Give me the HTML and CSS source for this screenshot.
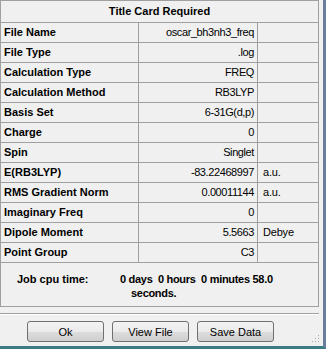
FILE: index.html
```html
<!DOCTYPE html>
<html lang="en">
<head>
  <meta charset="UTF-8" />
  <title>Title Card Required</title>
  <link rel="stylesheet" href="styles.css">
</head>
<body>
  <div class="frame">
    <div class="panel">
      <div class="title">Title Card Required</div>

      <div class="row"><div class="key">File Name</div><div class="val">oscar_bh3nh3_freq</div><div class="unit"></div></div>
      <div class="row"><div class="key">File Type</div><div class="val">.log</div><div class="unit"></div></div>
      <div class="row"><div class="key">Calculation Type</div><div class="val">FREQ</div><div class="unit"></div></div>
      <div class="row"><div class="key">Calculation Method</div><div class="val">RB3LYP</div><div class="unit"></div></div>
      <div class="row"><div class="key">Basis Set</div><div class="val">6-31G(d,p)</div><div class="unit"></div></div>
      <div class="row"><div class="key">Charge</div><div class="val">0</div><div class="unit"></div></div>
      <div class="row"><div class="key">Spin</div><div class="val">Singlet</div><div class="unit"></div></div>
      <div class="row"><div class="key">E(RB3LYP)</div><div class="val">-83.22468997</div><div class="unit">a.u.</div></div>
      <div class="row"><div class="key">RMS Gradient Norm</div><div class="val">0.00011144</div><div class="unit">a.u.</div></div>
      <div class="row"><div class="key">Imaginary Freq</div><div class="val">0</div><div class="unit"></div></div>
      <div class="row"><div class="key">Dipole Moment</div><div class="val">5.5663</div><div class="unit">Debye</div></div>
      <div class="row"><div class="key">Point Group</div><div class="val">C3</div><div class="unit"></div></div>

      <div class="job">
        <div class="job-label">Job cpu time:</div>
        <div class="job-time">
          <div>0 days&nbsp; 0 hours&nbsp; 0 minutes 58.0</div>
          <div class="job-wrap">seconds.</div>
        </div>
      </div>
    </div>

    <div class="sep"></div>

    <div class="buttons">
      <button>Ok</button>
      <button>View File</button>
      <button>Save Data</button>
      <span class="grip">
        <svg width="8" height="8" viewBox="0 0 8 8">
          <rect x="6" y="0" width="1" height="1" fill="#a8a8a8"/>
          <rect x="3" y="3" width="1" height="1" fill="#a8a8a8"/>
          <rect x="6" y="3" width="1" height="1" fill="#a8a8a8"/>
          <rect x="0" y="6" width="1" height="1" fill="#a8a8a8"/>
          <rect x="3" y="6" width="1" height="1" fill="#a8a8a8"/>
          <rect x="6" y="6" width="1" height="1" fill="#a8a8a8"/>
        </svg>
      </span>
    </div>
  </div>
</body>
</html>
```

FILE: styles.css
```css
body {
  margin: 0;
  background-color: #f0f0f0;
  font-family: "Liberation Sans", Arial, sans-serif;
  font-size: 11px;
  color: #000000;
  overflow: hidden;
}

.frame {
  width: 323px;
  height: 346px;
  border-right: 3px solid #6b7f9c;
  border-bottom: 3px solid #3d7b86;
  position: relative;
}

.panel {
  width: 317px;
  border: 1px solid #a0a0a0;
}

.title {
  height: 21px;
  line-height: 21px;
  text-align: center;
  font-weight: bold;
  border-bottom: 1px solid #a0a0a0;
}

.row {
  display: grid;
  grid-template-columns: 138px 119px 1fr;
  height: 19px;
  line-height: 19px;
  border-bottom: 1px solid #a0a0a0;
}

.key {
  font-weight: bold;
  padding-left: 3px;
  border-right: 1px solid #a0a0a0;
  white-space: nowrap;
}

.val {
  text-align: right;
  padding-right: 3px;
  letter-spacing: -0.4px;
  border-right: 1px solid #a0a0a0;
  white-space: nowrap;
}

.unit {
  padding-left: 5px;
  letter-spacing: -0.2px;
}

.job {
  display: flex;
  box-sizing: border-box;
  height: 43px;
  padding-top: 9px;
  font-weight: bold;
  line-height: 14px;
}

.job-label {
  width: 103px;
  padding-left: 16px;
}

.job-time {
  letter-spacing: -0.3px;
}

.job-wrap {
  padding-left: 11px;
}

.sep {
  margin-top: 6px;
  width: 319px;
  border-top: 1px solid #a0a0a0;
  border-bottom: 1px solid #ffffff;
}

.buttons {
  display: flex;
  gap: 8px;
  padding-left: 27px;
  margin-top: 6px;
}

button {
  width: 77px;
  height: 21px;
  font-family: "Liberation Sans", Arial, sans-serif;
  font-size: 11px;
  color: #000000;
  border: 1px solid #707070;
  border-radius: 3px;
  background: linear-gradient(#f2f2f2 0%, #ebebeb 50%, #dddddd 51%, #cfcfcf 100%);
  padding: 0;
}

.grip {
  position: absolute;
  right: 3px;
  bottom: 3px;
  line-height: 0;
}
```
